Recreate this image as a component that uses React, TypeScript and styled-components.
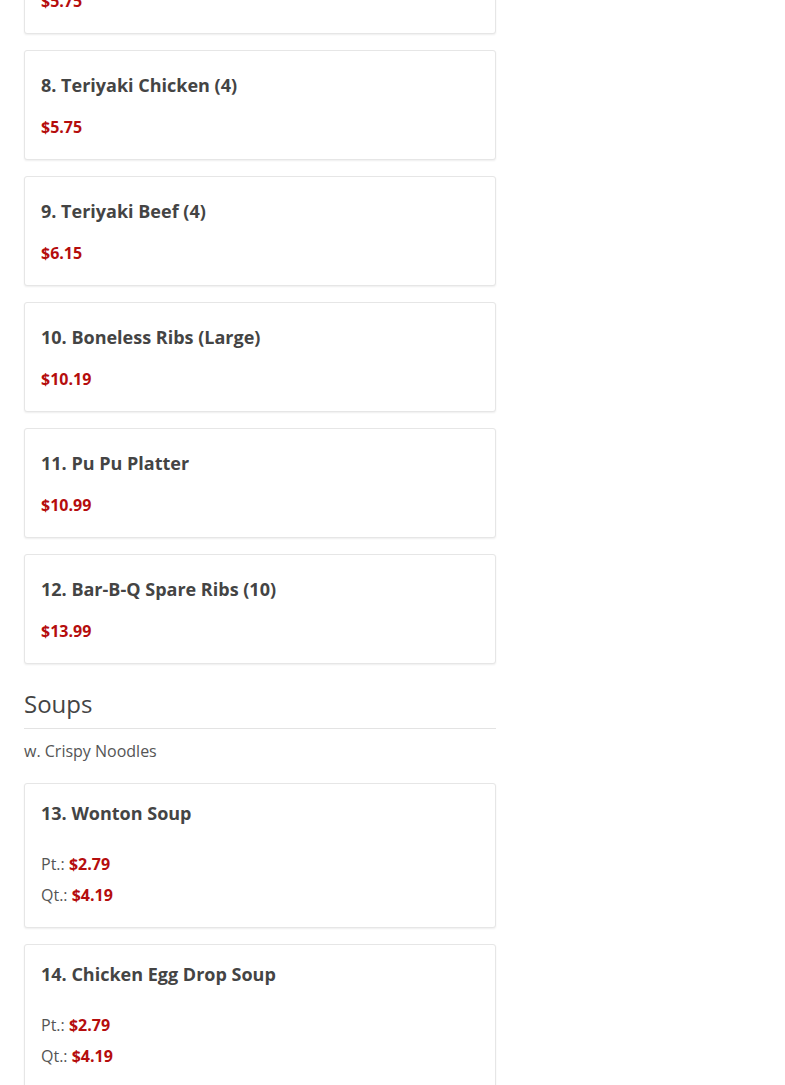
import styled, { createGlobalStyle } from 'styled-components';

const GlobalStyle = createGlobalStyle`
  html, body {
    margin: 0;
    padding: 0;
    background: #fff;
    font-family: "Open Sans", "Liberation Sans", sans-serif;
    color: #444;
    overflow: hidden;
  }
`;

const Page = styled.div`
  width: 472px;
  padding: 0 24px;
  margin-top: -76px;
`;

const List = styled.div`
  display: flex;
  flex-direction: column;
  gap: 16px;
`;

const Card = styled.div`
  box-sizing: border-box;
  border: 1px solid #e6e6e6;
  border-radius: 3px;
  box-shadow: 0 1px 2px rgba(0, 0, 0, 0.07);
  background: #fff;
  padding: 16px;
`;

const Title = styled.h3<{ spaced?: boolean }>`
  margin: ${({ spaced }) => (spaced ? '5px 0 17px' : '0 0 23px')};
  font-size: 18px;
  line-height: 26px;
  font-weight: 700;
  color: #444;
`;

const Price = styled.div`
  font-size: 16px;
  line-height: 24px;
  font-weight: 700;
  color: #b50d0d;
  margin-bottom: 4px;
`;

const SizeRow = styled.div`
  font-size: 16px;
  line-height: 31px;
  color: #555;

  b {
    font-weight: 700;
    color: #b50d0d;
  }
`;

const Section = styled.h2`
  margin: 24px 0 0;
  padding-bottom: 8px;
  border-bottom: 1px solid #e3e3e3;
  font-size: 24px;
  line-height: 32px;
  font-weight: 400;
  color: #444;
`;

const Note = styled.p`
  margin: 10px 0 20px;
  font-size: 16px;
  line-height: 24px;
  color: #555;
`;

const appetizers = [
  { name: '7. Egg Foo Young Bites', price: '$5.75' },
  { name: '8. Teriyaki Chicken (4)', price: '$5.75' },
  { name: '9. Teriyaki Beef (4)', price: '$6.15' },
  { name: '10. Boneless Ribs (Large)', price: '$10.19' },
  { name: '11. Pu Pu Platter', price: '$10.99' },
  { name: '12. Bar-B-Q Spare Ribs (10)', price: '$13.99' },
];

const soups = [
  { name: '13. Wonton Soup', pt: '$2.79', qt: '$4.19' },
  { name: '14. Chicken Egg Drop Soup', pt: '$2.79', qt: '$4.19' },
];

export default function App() {
  return (
    <>
      <GlobalStyle />
      <Page>
        <List>
          {appetizers.map((item) => (
            <Card key={item.name}>
              <Title spaced>{item.name}</Title>
              <Price>{item.price}</Price>
            </Card>
          ))}
        </List>

        <Section>Soups</Section>
        <Note>w. Crispy Noodles</Note>

        <List>
          {soups.map((item) => (
            <Card key={item.name}>
              <Title>{item.name}</Title>
              <SizeRow>Pt.: <b>{item.pt}</b></SizeRow>
              <SizeRow>Qt.: <b>{item.qt}</b></SizeRow>
            </Card>
          ))}
        </List>
      </Page>
    </>
  );
}
